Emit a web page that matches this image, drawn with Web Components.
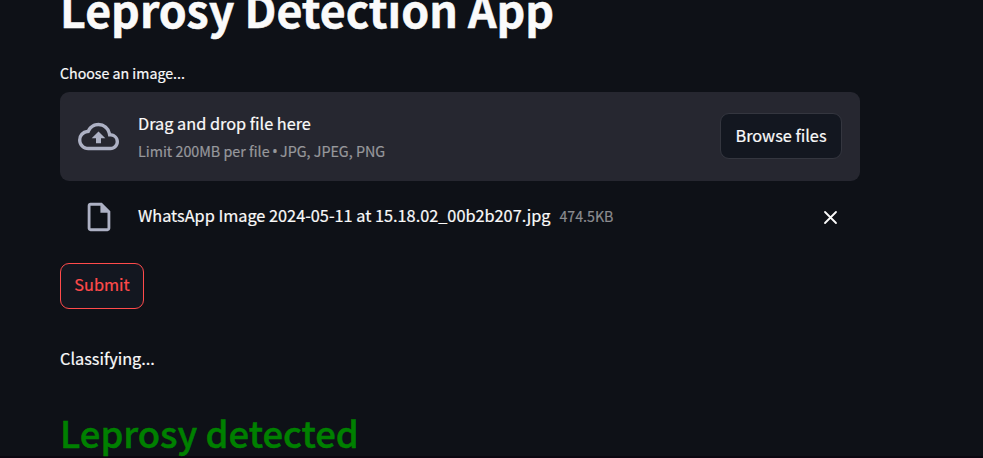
<!DOCTYPE html>
<html lang="en"><head><meta charset="utf-8"><title>Leprosy Detection App</title>
<style>html,body{margin:0;height:458px;overflow:hidden;background:#0e1117}</style></head><body>
<leprosy-app></leprosy-app>
<script>
const define=(n,html)=>customElements.define(n,class extends HTMLElement{constructor(){super();this.attachShadow({mode:'open'}).innerHTML=html;}});
define('text-line',`<style>:host{display:block;white-space:nowrap;line-height:24px}</style><span><slot></slot></span>`);
define('action-button',`<style>:host{display:block}button{display:block;box-sizing:border-box;width:var(--w);height:46px;margin:0;padding:0 0 var(--lift);border:1px solid var(--edge);border-radius:9px;background:#131720;color:inherit;font:inherit;-webkit-text-stroke:inherit;white-space:nowrap}</style><button><slot></slot></button>`);
define('file-dropzone',`<style>
:host{display:flex;align-items:center;box-sizing:border-box;height:89px;padding:0 18px;border-radius:9px;background:#262730}
svg{width:41px;height:41px;fill:#adb1c4;margin-right:19px}
.t{flex:1;display:flex;flex-direction:column;gap:4px;padding-top:1px}
.s{font-size:14.3px;color:#97989c}
.s span{font-family:"Open Sans",sans-serif;font-size:15.5px;line-height:1;margin:0 -.9px}
action-button{--w:122px;--edge:#34363f;--lift:1px;margin-bottom:2px}
</style><svg viewBox="0 0 24 24"><path d="M19.35 10.04A7.49 7.49 0 0 0 12 4C9.11 4 6.6 5.64 5.35 8.04A5.994 5.994 0 0 0 0 14c0 3.31 2.69 6 6 6h13c2.76 0 5-2.24 5-5 0-2.64-2.05-4.78-4.65-4.96zM19 18H6c-2.21 0-4-1.79-4-4 0-2.05 1.53-3.76 3.56-3.97l1.07-.11.5-.95A5.469 5.469 0 0 1 12 6c2.62 0 4.88 1.86 5.39 4.43l.3 1.5 1.53.11A2.98 2.98 0 0 1 22 15c0 1.65-1.35 3-3 3zM8 13h2.55v3h2.9v-3H16l-4-4z"/></svg>
<div class="t"><text-line>Drag and drop file here</text-line><text-line class="s">Limit 200MB per file <span>•</span> JPG, JPEG, PNG</text-line></div><action-button>Browse files</action-button>`);
define('uploaded-file',`<style>
:host{display:flex;align-items:center;height:34px;padding:0 22px}
.f{width:34px;height:34px;fill:#adb1c4;margin-right:22px}
.n{padding-bottom:4px}
.s{font-size:14.2px;color:#8b8c90;margin-left:9px;flex:1;padding-bottom:2px}
.x{width:15px;height:15px;stroke:#fafafa;stroke-width:1.8;fill:none;stroke-linecap:round}
</style><svg class="f" viewBox="0 0 24 24"><path d="M14 2H6c-1.1 0-1.99.9-1.99 2L4 20c0 1.1.89 2 1.99 2H18c1.1 0 2-.9 2-2V8l-6-6zM6 20V4h7v5h5v11H6z"/></svg>
<text-line class="n">WhatsApp Image 2024-05-11 at 15.18.02_00b2b207.jpg</text-line><text-line class="s">474.5KB</text-line><svg class="x" viewBox="0 0 15 15"><path d="M2 2L13 13M13 2L2 13"/></svg>`);
define('leprosy-app',`<style>
:host{display:flex;flex-direction:column;box-sizing:border-box;height:458px;padding:0 123px 0 60px;border-bottom:2px solid #0a0710;font:400 16.3px/24px "Noto Sans CJK SC",sans-serif;color:#fafafa;-webkit-text-stroke:.2px currentColor}
:host>*,text-line,file-dropzone,uploaded-file{flex:none}
.h{font-size:44.7px;font-weight:700;height:64px;margin-top:-3px;-webkit-text-stroke:.5px currentColor}
.l{font-size:14.2px;height:31px}
uploaded-file{margin-top:19px}
.sub{margin-top:29px;color:#ff4b4b;--w:84px;--edge:#ff4b4b;--lift:5px}
.c{margin-top:37px}
.r{font-size:36.4px;font-weight:500;color:green;margin-top:50px;-webkit-text-stroke:.5px currentColor}
</style><text-line class="h">Leprosy Detection App</text-line><text-line class="l">Choose an image...</text-line>
<file-dropzone></file-dropzone><uploaded-file></uploaded-file><action-button class="sub">Submit</action-button><text-line class="c">Classifying...</text-line><text-line class="r">Leprosy detected</text-line>`);
</script></body></html>
